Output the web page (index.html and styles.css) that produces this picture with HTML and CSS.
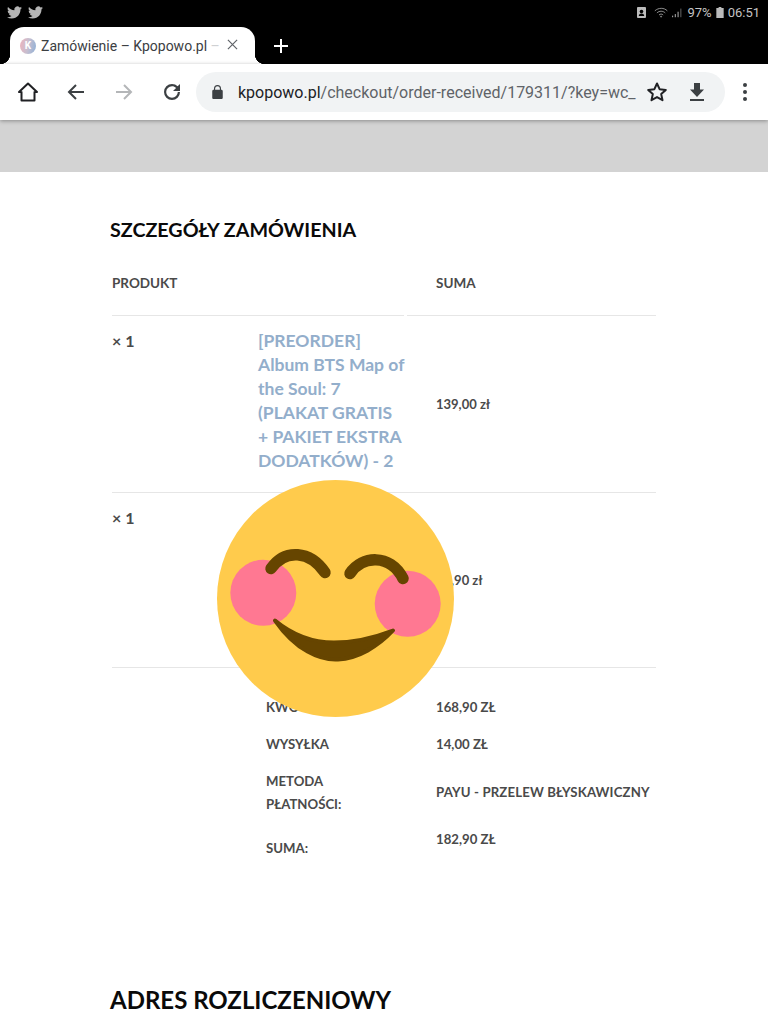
FILE: index.html
```html
<!DOCTYPE html>
<html lang="pl">
<head>
    <meta charset="UTF-8">
    <meta name="viewport" content="width=device-width, initial-scale=1.0">
    <title>Zamówienie – Kpopowo.pl</title>
    <link rel="stylesheet" href="styles.css">
</head>
<body>

<div class="status-bar">
    <div class="status-left">
        <svg class="bird" viewBox="0 0 24 24"><path d="M23.953 4.57a10 10 0 01-2.825.775 4.958 4.958 0 002.163-2.723c-.951.555-2.005.959-3.127 1.184a4.92 4.92 0 00-8.384 4.482C7.69 8.095 4.067 6.13 1.64 3.162a4.822 4.822 0 00-.666 2.475c0 1.71.87 3.213 2.188 4.096a4.904 4.904 0 01-2.228-.616v.06a4.923 4.923 0 003.946 4.827 4.996 4.996 0 01-2.212.085 4.936 4.936 0 004.604 3.417 9.867 9.867 0 01-6.102 2.105c-.39 0-.779-.023-1.17-.067a13.995 13.995 0 007.557 2.209c9.053 0 13.998-7.496 13.998-13.985 0-.21 0-.42-.015-.63A9.935 9.935 0 0024 4.59z"/></svg>
        <svg class="bird" viewBox="0 0 24 24"><path d="M23.953 4.57a10 10 0 01-2.825.775 4.958 4.958 0 002.163-2.723c-.951.555-2.005.959-3.127 1.184a4.92 4.92 0 00-8.384 4.482C7.69 8.095 4.067 6.13 1.64 3.162a4.822 4.822 0 00-.666 2.475c0 1.71.87 3.213 2.188 4.096a4.904 4.904 0 01-2.228-.616v.06a4.923 4.923 0 003.946 4.827 4.996 4.996 0 01-2.212.085 4.936 4.936 0 004.604 3.417 9.867 9.867 0 01-6.102 2.105c-.39 0-.779-.023-1.17-.067a13.995 13.995 0 007.557 2.209c9.053 0 13.998-7.496 13.998-13.985 0-.21 0-.42-.015-.63A9.935 9.935 0 0024 4.59z"/></svg>
    </div>
    <div class="status-right">
        <svg class="st-save" viewBox="0 0 10 12"><path d="M1 0h8a1 1 0 011 1v10a1 1 0 01-1 1H1a1 1 0 01-1-1V1a1 1 0 011-1z" fill="#bbb"/><circle cx="5" cy="5" r="2" fill="#000"/><path d="M2 10c0-2 1-2.500 3-2.500s3 .5 3 2.500z" fill="#000"/></svg>
        <svg class="st-wifi" viewBox="0 0 18 12" fill="none" stroke="#aaa" stroke-width="1"><path d="M1 4c4.500-4 11-4 15 0"/><path d="M3.500 6.500c3-2.700 7-2.700 10 0"/><path d="M6 9c1.800-1.500 3.400-1.500 5 0"/><circle cx="8.500" cy="11" r=".6"/></svg>
        <svg class="st-signal" viewBox="0 0 14 12" fill="#999"><rect x="0" y="10" width="1.500" height="2"/><rect x="3.500" y="8" width="1.500" height="4"/><rect x="7" y="5" width="1.500" height="7"/><rect x="10.500" y="1" width="1.500" height="11" fill="#555"/></svg>
        <span class="st-text">97%</span>
        <svg class="st-batt" viewBox="0 0 8 12"><path d="M2.500 0h3v1H8v11H0V1h2.500z" fill="#bbb"/></svg>
        <span class="st-text">06:51</span>
    </div>
</div>

<div class="tab-strip">
    <div class="tab">
        <span class="favicon">K</span>
        <span class="tab-title">Zamówienie – Kpopowo.pl <span class="tab-fade">–</span></span>
        <svg class="tab-close" viewBox="0 0 12 12" fill="none" stroke="#5f6368" stroke-width="1.300"><path d="M1 1l10 10M11 1L1 11"/></svg>
    </div>
    <svg class="new-tab" viewBox="0 0 14 14" fill="none" stroke="#fff" stroke-width="2"><path d="M7 0v14M0 7h14"/></svg>
</div>

<div class="toolbar">
    <svg class="tool" viewBox="0 0 24 24" fill="none" stroke="#202124" stroke-width="2" stroke-linejoin="round"><path d="M12 3.500L3 12h2.500v8.500h13V12H21z"/></svg>
    <svg class="tool" viewBox="0 0 24 24" fill="none" stroke="#3c4043" stroke-width="2"><path d="M20 12H5M12 5l-7 7 7 7"/></svg>
    <svg class="tool" viewBox="0 0 24 24" fill="none" stroke="#b4b6b8" stroke-width="2"><path d="M4 12h15M12 5l7 7-7 7"/></svg>
    <svg class="tool" viewBox="0 0 24 24" fill="#3c4043"><path d="M17.650 6.350A7.960 7.960 0 0012 4a8 8 0 108 8h-2.200A5.800 5.800 0 1112 6.200c1.600 0 3 .65 4.050 1.700L13 11h7V4z"/></svg>
    <div class="address">
        <svg class="lock" viewBox="0 0 12 16" fill="#3c4043"><path d="M10.500 5.500H10V4a4 4 0 00-8 0v1.500h-.5C.7 5.500 0 6.200 0 7v7.500c0 .8.700 1.500 1.500 1.500h9c.8 0 1.500-.7 1.500-1.500V7c0-.8-.7-1.500-1.500-1.500zM3.300 5.500V4a2.700 2.700 0 015.400 0v1.500z"/></svg>
        <div class="url"><span class="url-host">kpopowo.pl</span>/checkout/order-received/179311/?key=wc_</div>
        <svg class="addr-icon" viewBox="0 0 24 24" fill="none" stroke="#202124" stroke-width="2" stroke-linejoin="round"><path d="M12 3.500l2.600 5.700 6.200.7-4.600 4.200 1.300 6.100-5.500-3.100-5.500 3.100 1.300-6.100-4.600-4.200 6.200-.7z"/></svg>
        <svg class="addr-icon" viewBox="0 0 24 24" fill="#3c4043"><path d="M19 9.500h-4V3H9v6.500H5l7 7.500zM5 19v2h14v-2z"/></svg>
    </div>
    <svg class="tool menu" viewBox="0 0 24 24" fill="#3c4043"><circle cx="12" cy="5" r="2"/><circle cx="12" cy="12" r="2"/><circle cx="12" cy="19" r="2"/></svg>
</div>

<div class="grey-band"></div>

<div class="content">
    <h2 class="section-title">Szczegóły zamówienia</h2>

    <div class="row row-head">
        <div class="cell-name">Produkt</div>
        <div class="cell-total">Suma</div>
    </div>

    <div class="row row-item first-item">
        <div class="qty">× 1</div>
        <a class="product-link" href="#">[PREORDER]<br>Album BTS Map of<br>the Soul: 7<br>(PLAKAT GRATIS<br>+ PAKIET EKSTRA<br>DODATKÓW) - 2</a>
        <div class="price">139,00 zł</div>
    </div>

    <div class="row row-item second-item">
        <div class="qty">× 1</div>
        <div></div>
        <div class="price">29,90 zł</div>
    </div>

    <div class="totals">
        <div class="total-row"><div>Kwota:</div><div>168,90 zł</div></div>
        <div class="total-row"><div>Wysyłka</div><div>14,00 zł</div></div>
        <div class="total-row center-row"><div>Metoda płatności:</div><div class="pay-method">PayU - Przelew błyskawiczny</div></div>
        <div class="total-row sum-row"><div>Suma:</div><div>182,90 zł</div></div>
    </div>

    <h2 class="section-title billing">Adres rozliczeniowy</h2>
</div>

<svg class="emoji" viewBox="217 479.500 237 237">
    <circle cx="335.500" cy="598" r="118.500" fill="#ffcb4c"/>
    <circle cx="263.300" cy="592.300" r="33" fill="#ff7892"/>
    <circle cx="407.700" cy="603.300" r="33" fill="#ff7892"/>
    <path d="M271 568C285 548 310 550 325 572" fill="none" stroke="#664500" stroke-width="11.500" stroke-linecap="round"/>
    <path d="M350 573C362 555 390 553 403 578" fill="none" stroke="#664500" stroke-width="11.500" stroke-linecap="round"/>
    <path d="M275 620C296 650 320 660 338 659C358 658 378 646 393 630C372 638 352 642 334 642C312 642 292 634 275 620z" fill="#664500" stroke="#664500" stroke-width="4" stroke-linejoin="round"/>
</svg>

</body>
</html>
```

FILE: styles.css
```css
html, body {
    margin: 0;
    padding: 0;
}
body {
    background-color: #fff;
    color: #4a4a4a;
    font-family: Lato, Arial, sans-serif;
    width: 768px;
    height: 1024px;
    overflow: hidden;
    position: relative;
}

/* android status bar */
.status-bar {
    background-color: #000;
    height: 27px;
    padding: 0 8px 0 7px;
    display: flex;
    justify-content: space-between;
    align-items: flex-start;
}
.status-left {
    display: flex;
    gap: 6px;
    padding-top: 5px;
}
.bird {
    width: 15px;
    height: 15px;
    fill: #b5b5b5;
}
.status-right {
    display: flex;
    align-items: center;
    height: 24px;
}
.st-text {
    font-family: Roboto, sans-serif;
    font-size: 13px;
    color: #c4c4c4;
}
.st-save {
    width: 9px;
    height: 11px;
    margin-right: 8px;
}
.st-wifi {
    width: 15px;
    height: 11px;
    margin-right: 3px;
}
.st-signal {
    width: 11px;
    height: 11px;
    margin-right: 4px;
}
.st-batt {
    width: 8px;
    height: 11px;
    margin: 0 4px;
}

/* tabs */
.tab-strip {
    background-color: #000;
    height: 37px;
    padding-left: 10px;
    display: flex;
    align-items: stretch;
}
.tab {
    position: relative;
    width: 245px;
    box-sizing: border-box;
    background-color: #fff;
    border-radius: 14px 14px 0 0;
    padding: 0 16px 0 10px;
    display: flex;
    align-items: center;
}
.tab::before,
.tab::after {
    content: "";
    position: absolute;
    bottom: 0;
    width: 10px;
    height: 10px;
}
.tab::before {
    left: -10px;
    background: radial-gradient(circle at 0 0, #000 10px, #fff 10.5px);
}
.tab::after {
    right: -10px;
    background: radial-gradient(circle at 100% 0, #000 10px, #fff 10.5px);
}
.favicon {
    flex: none;
    width: 16px;
    height: 16px;
    border-radius: 50%;
    background: linear-gradient(100deg, #eeb4bd 0%, #c6bfd0 50%, #8fb0d6 100%);
    color: #fff;
    font-family: Roboto, sans-serif;
    font-size: 10px;
    font-weight: 700;
    line-height: 16px;
    text-align: center;
}
.tab-title {
    flex: none;
    font-family: Roboto, sans-serif;
    font-size: 14px;
    color: #3c4043;
    margin-left: 5px;
    width: 176px;
    white-space: nowrap;
}
.tab-fade {
    color: #cfd1d3;
}
.tab-close {
    flex: none;
    width: 11px;
    height: 11px;
    margin: -2px 0 0 10px;
}
.new-tab {
    width: 14px;
    height: 14px;
    margin: 12px 0 0 19px;
}

/* toolbar */
.toolbar {
    position: relative;
    height: 56px;
    background-color: #fff;
    box-shadow: 0 1px 4px rgba(0, 0, 0, 0.35);
    display: flex;
    align-items: center;
    padding-left: 16px;
    gap: 24px;
}
.tool {
    flex: none;
    width: 24px;
    height: 24px;
}
.address {
    flex: none;
    width: 529px;
    height: 40px;
    box-sizing: border-box;
    margin-left: -12px;
    background-color: #f1f3f4;
    border-radius: 20px;
    padding: 0 16px;
    display: flex;
    align-items: center;
}
.lock {
    flex: none;
    width: 11px;
    height: 14px;
}
.url {
    flex: none;
    width: 397px;
    margin-left: 15px;
    font-family: Roboto, sans-serif;
    font-size: 16px;
    color: #5f6368;
    white-space: nowrap;
}
.url-host {
    color: #202124;
}
.addr-icon {
    flex: none;
    width: 24px;
    height: 24px;
    margin-left: 10px;
}
.addr-icon + .addr-icon {
    margin-left: 16px;
}
.menu {
    margin-left: -16px;
}

.grey-band {
    background-color: #d3d3d3;
    height: 52px;
}

/* order */
.content {
    padding: 45px 112px 0 112px;
}
.section-title {
    margin: 0 0 0 -2px;
    color: #0a0a0a;
    font-size: 19.700px;
    font-weight: 700;
    line-height: 26px;
    text-transform: uppercase;
}
.row {
    display: grid;
    grid-template-columns: 146px 146px 252px;
}
.row-head {
    margin-top: 28px;
    font-size: 13.500px;
    font-weight: 700;
    text-transform: uppercase;
    line-height: 24px;
    grid-template-columns: 292px 249px;
    column-gap: 3px;
}
.cell-name,
.cell-total {
    padding-bottom: 20px;
    border-bottom: 1px solid #e6e6e6;
}
.cell-total {
    padding-left: 29px;
}
.row-item {
    border-bottom: 1px solid #e6e6e6;
    box-sizing: border-box;
}
.first-item {
    height: 177px;
}
.second-item {
    height: 175px;
}
.qty {
    padding-top: 13px;
    font-size: 16px;
    font-weight: 700;
    line-height: 24px;
}
.product-link {
    padding-top: 13px;
    color: #93aecb;
    font-size: 17.500px;
    font-weight: 700;
    line-height: 24px;
    white-space: nowrap;
    text-decoration: none;
}
.price {
    align-self: center;
    padding-left: 32px;
    font-size: 13px;
    font-weight: 700;
}
.totals {
    padding-top: 21px;
    font-size: 13.200px;
    font-weight: 700;
    line-height: 23px;
    text-transform: uppercase;
}
.total-row {
    display: grid;
    grid-template-columns: 324px 220px;
    padding: 7px 0;
}
.total-row > :first-child {
    padding: 0 80px 0 154px;
}
.center-row {
    align-items: center;
}
.pay-method {
    letter-spacing: 0.15px;
    margin-top: -2px;
}
.sum-row {
    padding: 5px 0 0;
}
.sum-row > :first-child {
    padding-top: 9px;
}
.billing {
    margin-top: 127px;
    font-size: 24px;
}

.emoji {
    position: absolute;
    left: 217px;
    top: 479.500px;
    width: 237px;
    height: 237px;
}
```
